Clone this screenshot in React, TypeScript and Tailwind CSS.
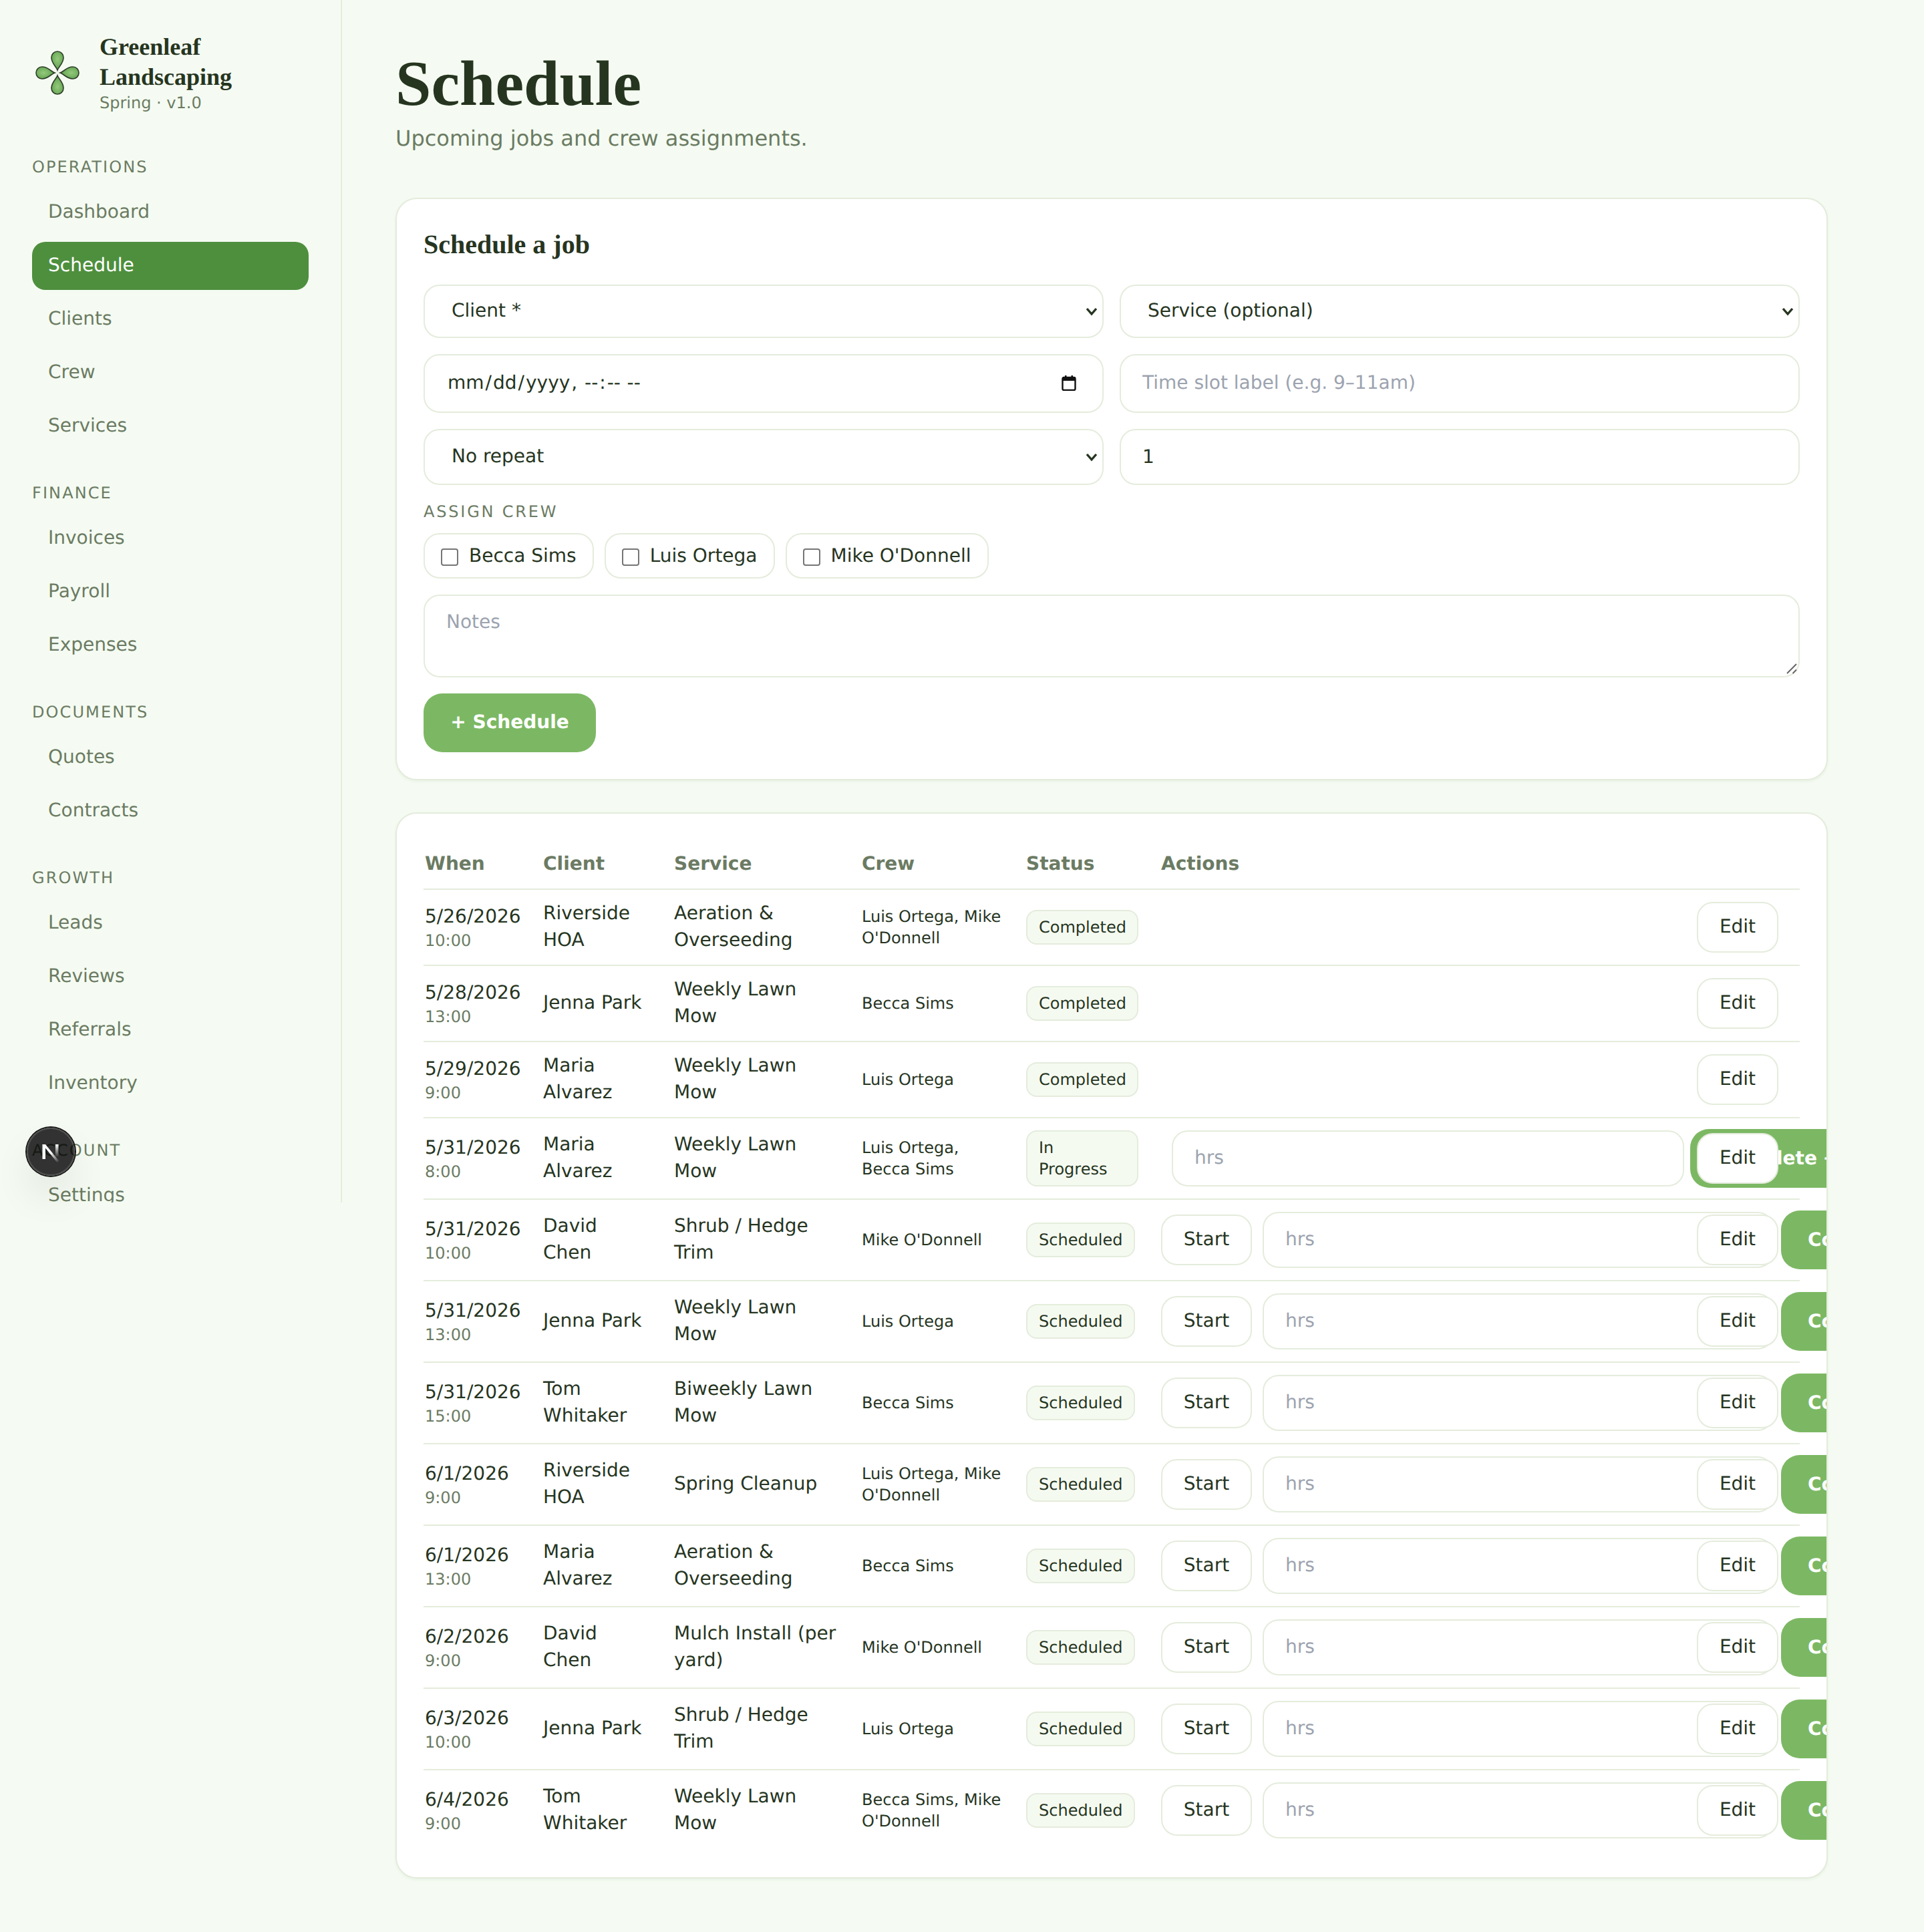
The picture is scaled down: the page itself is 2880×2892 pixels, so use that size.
import React from "react";

const sections = [
  { title: "OPERATIONS", items: ["Dashboard", "Schedule", "Clients", "Crew", "Services"] },
  { title: "FINANCE", items: ["Invoices", "Payroll", "Expenses"] },
  { title: "DOCUMENTS", items: ["Quotes", "Contracts"] },
  { title: "GROWTH", items: ["Leads", "Reviews", "Referrals", "Inventory"] },
  { title: "ACCOUNT", items: ["Settings"] },
];

type Kind = "done" | "progress" | "sched";
const rows: { d: string; t: string; c: string; s: string; w: string; st: string; k: Kind }[] = [
  { d: "5/26/2026", t: "10:00", c: "Riverside HOA", s: "Aeration & Overseeding", w: "Luis Ortega, Mike O'Donnell", st: "Completed", k: "done" },
  { d: "5/28/2026", t: "13:00", c: "Jenna Park", s: "Weekly Lawn Mow", w: "Becca Sims", st: "Completed", k: "done" },
  { d: "5/29/2026", t: "9:00", c: "Maria Alvarez", s: "Weekly Lawn Mow", w: "Luis Ortega", st: "Completed", k: "done" },
  { d: "5/31/2026", t: "8:00", c: "Maria Alvarez", s: "Weekly Lawn Mow", w: "Luis Ortega, Becca Sims", st: "In Progress", k: "progress" },
  { d: "5/31/2026", t: "10:00", c: "David Chen", s: "Shrub / Hedge Trim", w: "Mike O'Donnell", st: "Scheduled", k: "sched" },
  { d: "5/31/2026", t: "13:00", c: "Jenna Park", s: "Weekly Lawn Mow", w: "Luis Ortega", st: "Scheduled", k: "sched" },
  { d: "5/31/2026", t: "15:00", c: "Tom Whitaker", s: "Biweekly Lawn Mow", w: "Becca Sims", st: "Scheduled", k: "sched" },
  { d: "6/1/2026", t: "9:00", c: "Riverside HOA", s: "Spring Cleanup", w: "Luis Ortega, Mike O'Donnell", st: "Scheduled", k: "sched" },
  { d: "6/1/2026", t: "13:00", c: "Maria Alvarez", s: "Aeration & Overseeding", w: "Becca Sims", st: "Scheduled", k: "sched" },
  { d: "6/2/2026", t: "9:00", c: "David Chen", s: "Mulch Install (per yard)", w: "Mike O'Donnell", st: "Scheduled", k: "sched" },
  { d: "6/3/2026", t: "10:00", c: "Jenna Park", s: "Shrub / Hedge Trim", w: "Luis Ortega", st: "Scheduled", k: "sched" },
  { d: "6/4/2026", t: "9:00", c: "Tom Whitaker", s: "Weekly Lawn Mow", w: "Becca Sims, Mike O'Donnell", st: "Scheduled", k: "sched" },
];

const field =
  "w-full rounded-[24px] border-2 border-[#e4ecdc] bg-white text-[28px] leading-[40px] text-[#26351f] outline-none placeholder:text-[#9ca3af]";

function Logo() {
  const petal = "M38 34 C36 28 29 24 29 15 A9 9 0 0 1 47 15 C47 24 40 28 38 34 Z";
  return (
    <svg width="76" height="76" viewBox="0 0 76 76" className="shrink-0">
      <defs>
        <radialGradient id="leaf" cx="50%" cy="40%" r="60%">
          <stop offset="0%" stopColor="#94c97c" />
          <stop offset="100%" stopColor="#5d9f4c" />
        </radialGradient>
      </defs>
      {[0, 90, 180, 270].map((a) => (
        <path key={a} d={petal} fill="url(#leaf)" stroke="#2f3e2a" strokeWidth="1.6" transform={`rotate(${a} 38 38)`} />
      ))}
    </svg>
  );
}

function Chevron() {
  return (
    <svg width="18" height="13" viewBox="0 0 18 13" className="pointer-events-none absolute right-[9px] top-1/2 -translate-y-[6px]">
      <path d="M2 2 L9 10 L16 2" fill="none" stroke="#26351f" strokeWidth="3.4" />
    </svg>
  );
}

function Select({ label, className }: { label: string; className: string }) {
  return (
    <div className={`relative ${className}`}>
      <select className={`${field} h-full appearance-none pb-[2px] pl-[40px] pr-[40px]`} defaultValue={label}>
        <option>{label}</option>
      </select>
      <Chevron />
    </div>
  );
}

function Chip({ name }: { name: string }) {
  return (
    <label className="flex h-[68px] items-center gap-[16px] rounded-[24px] border-2 border-[#e4ecdc] bg-white pl-[24px] pr-[24px] text-[28px] leading-[40px] text-[#26351f]">
      <input type="checkbox" className="h-[26px] w-[26px] translate-y-[2px] appearance-none rounded-[4px] border-2 border-[#767676] bg-white" />
      {name}
    </label>
  );
}

function Complete() {
  return (
    <button className="h-[88px] shrink-0 whitespace-nowrap rounded-[28px] bg-[#7cb863] px-[40px] text-[28px] font-bold leading-[40px] text-white">
      Complete →
    </button>
  );
}

function GhostButton({ children, className = "" }: { children: React.ReactNode; className?: string }) {
  return (
    <button className={`h-[76px] shrink-0 rounded-[24px] border-2 border-[#e4ecdc] bg-white px-[32px] text-[28px] leading-[40px] text-[#26351f] ${className}`}>
      {children}
    </button>
  );
}

export default function App() {
  return (
    <div className="relative flex min-h-[2892px] w-full items-start bg-[#f5fbf2] font-['DejaVu_Sans',sans-serif] text-[#26351f] [&_*]:[text-rendering:geometricPrecision]">
      <aside className="h-[1800px] w-[512px] shrink-0 overflow-hidden border-r-2 border-[#e4ecdc] px-[48px] pt-[48px]">
        <div className="mb-[64px] flex items-center gap-[25px]">
          <Logo />
          <div>
            <div className="font-['Liberation_Serif',serif] text-[36px] font-bold leading-[45px] text-[#26351f]">
              Greenleaf Landscaping
            </div>
            <div className="text-[24px] leading-[32px] text-[#6b7b63]">Spring · v1.0</div>
          </div>
        </div>
        <nav className="flex flex-col gap-[48px]">
          {sections.map((s) => (
            <div key={s.title}>
              <div className="mb-[16px] text-[24px] leading-[32px] tracking-[2.1px] text-[#6b7b63]">{s.title}</div>
              <div className="flex w-[414px] flex-col gap-[8px]">
                {s.items.map((i) => (
                  <a
                    key={i}
                    className={`flex h-[72px] shrink-0 items-center rounded-[20px] px-[24px] pb-[2px] text-[28px] leading-[40px] ${
                      i === "Schedule" ? "bg-[#4e8f3e] text-white" : "text-[#6b7b63]"
                    }`}
                  >
                    {i}
                  </a>
                ))}
              </div>
            </div>
          ))}
        </nav>
      </aside>

      <main className="w-[2368px] pb-[80px] pl-[80px] pr-[144px] pt-[75px]">
        <h1 className="font-['Liberation_Serif',serif] text-[96px] font-bold leading-[100px] text-[#26351f]">Schedule</h1>
        <p className="mb-[65px] mt-[8px] text-[32px] leading-[48px] text-[#6b7b63]">Upcoming jobs and crew assignments.</p>

        <section className="mb-[48px] rounded-[32px] border-2 border-[#e4ecdc] bg-white p-[40px] shadow-[0_2px_4px_rgba(40,60,30,0.06)]">
          <h2 className="mb-[32px] font-['Liberation_Serif',serif] text-[40px] font-bold leading-[56px] text-[#26351f]">Schedule a job</h2>
          <div className="grid grid-cols-2 gap-x-[24px] gap-y-[24px]">
            <Select label="Client *" className="h-[80px]" />
            <Select label="Service (optional)" className="h-[80px]" />
            <div className="relative h-[88px]">
              <input
                type="datetime-local"
                className={`${field} h-full pb-[2px] pl-[32px] pr-[34px] [&::-webkit-calendar-picker-indicator]:opacity-0 [&::-webkit-datetime-edit-month-field]:px-[2px] [&::-webkit-datetime-edit-day-field]:px-[2px] [&::-webkit-datetime-edit-year-field]:px-[2px] [&::-webkit-datetime-edit-hour-field]:px-[2px] [&::-webkit-datetime-edit-minute-field]:px-[2px] [&::-webkit-datetime-edit-ampm-field]:px-[2px]`}
              />
              <svg width="22" height="24" viewBox="0 0 22 24" className="pointer-events-none absolute left-[955px] top-[31px]">
                <path d="M1.5 6 Q1.5 4 3.5 4 H18.5 Q20.5 4 20.5 6 V21 Q20.5 23 18.5 23 H3.5 Q1.5 23 1.5 21 Z" fill="white" stroke="#111" strokeWidth="2.4" />
                <path d="M1 4 H21 V9 H1 Z M5 1 H7.5 V4 H5 Z M14.5 1 H17 V4 H14.5 Z" fill="#111" />
              </svg>
            </div>
            <input className={`${field} h-[88px] px-[32px] pb-[4px]`} placeholder="Time slot label (e.g. 9–11am)" />
            <Select label="No repeat" className="h-[84px]" />
            <input type="number" defaultValue={1} className={`${field} h-[84px] px-[32px] pb-[2px]`} />
          </div>
          <div className="mb-[16px] mt-[24px] text-[24px] leading-[32px] tracking-[2.8px] text-[#6b7b63]">ASSIGN CREW</div>
          <div className="mb-[24px] flex gap-[16px]">
            <Chip name="Becca Sims" />
            <Chip name="Luis Ortega" />
            <Chip name="Mike O'Donnell" />
          </div>
          <div className="relative mb-[24px] h-[124px]">
            <textarea className={`${field} h-full resize-none px-[32px] py-[19px]`} placeholder="Notes" />
            <svg width="18" height="18" viewBox="0 0 18 18" className="pointer-events-none absolute bottom-[4px] right-[2px]">
              <path d="M1 16 L15 2 M9.5 16 L15 10.5" stroke="#666" strokeWidth="2" fill="none" />
            </svg>
          </div>
          <button className="h-[88px] w-[258px] rounded-[28px] bg-[#7cb863] pb-[2px] text-[28px] font-bold leading-[40px] text-white">+ Schedule</button>
        </section>

        <section className="overflow-hidden rounded-[32px] border-2 border-[#e4ecdc] bg-white p-[40px] shadow-[0_2px_4px_rgba(40,60,30,0.06)]">
          <table className="w-[2060px] table-fixed border-separate border-spacing-0 text-left">
            <colgroup>
              <col className="w-[177px]" />
              <col className="w-[195px]" />
              <col className="w-[282px]" />
              <col className="w-[246px]" />
              <col className="w-[202px]" />
              <col className="w-[958px]" />
            </colgroup>
            <thead>
              <tr>
                {["When", "Client", "Service", "Crew", "Status", "Actions"].map((h) => (
                  <th
                    key={h}
                    className={`h-[74px] border-b-2 border-[#e4ecdc] pb-[2px] align-middle text-[28px] font-bold leading-[40px] text-[#6b7b63] ${
                      h === "Service" ? "pl-[3px]" : "pl-[2px]"
                    }`}
                  >
                    {h}
                  </th>
                ))}
              </tr>
            </thead>
            <tbody>
              {rows.map((r, idx) => {
                const last = idx === rows.length - 1;
                const base = `${last ? "h-[120px]" : r.k === "done" ? "h-[114px] border-b-2" : "h-[122px] border-b-2"} border-[#e4ecdc] align-middle`;
                const cell = `${base} pl-[2px]`;
                return (
                  <tr key={idx}>
                    <td className={cell}>
                      <div className="text-[28px] leading-[40px] text-[#26351f]">{r.d}</div>
                      <div className="text-[24px] leading-[33px] text-[#6b7b63]">{r.t}</div>
                    </td>
                    <td className={`${cell} pb-[2px] pr-[40px] text-[28px] leading-[40px]`}>{r.c}</td>
                    <td className={`${base} pb-[2px] pl-[3px] pr-[33px] text-[28px] leading-[40px]`}>{r.s}</td>
                    <td className={`${cell} pr-[28px] text-[24px] leading-[32px]`}>{r.w}</td>
                    <td className={cell}>
                      <span className="inline-block max-w-[168px] rounded-[16px] border-2 border-[#e4ecdc] bg-[#f5faf1] pb-[8px] pl-[17px] pr-[16px] pt-[8px] text-[24px] leading-[32px] text-[#26351f]">
                        {r.st}
                      </span>
                    </td>
                    <td className={`${cell} relative`}>
                      {r.k === "sched" && (
                        <div className="flex w-[958px] items-center">
                          <GhostButton className="w-[136px] !px-0 pb-[2px]">Start</GhostButton>
                          <input className={`${field} ml-[16px] h-[84px] !w-[765px] shrink-0 px-[32px] pb-[4px]`} placeholder="hrs" />
                          <div className="ml-[11px] shrink-0">
                            <Complete />
                          </div>
                        </div>
                      )}
                      {r.k === "progress" && (
                        <div className="flex w-[958px] items-center pl-[16px]">
                          <input className={`${field} h-[84px] !w-[767px] shrink-0 px-[32px] pb-[4px]`} placeholder="hrs" />
                          <div className="ml-[9px] shrink-0">
                            <Complete />
                          </div>
                        </div>
                      )}
                      <GhostButton className="absolute right-[32px] top-1/2 w-[122px] -translate-y-1/2 !px-0 pb-[2px]">Edit</GhostButton>
                    </td>
                  </tr>
                );
              })}
            </tbody>
          </table>
        </section>
      </main>

      <div className="absolute left-[40px] top-[1688px] h-[72px] w-[72px] rounded-full bg-black/80 shadow-[0_0_0_2px_#171717,inset_0_0_0_2px_rgba(255,255,255,0.14),0_32px_64px_-16px_rgba(0,0,0,0.24)]">
        <svg width="72" height="72" viewBox="2 2 72 72">
          <defs>
            <linearGradient id="nd" x1="30" y1="30" x2="50" y2="54" gradientUnits="userSpaceOnUse">
              <stop offset="0.4" stopColor="#fff" />
              <stop offset="1" stopColor="#fff" stopOpacity="0" />
            </linearGradient>
            <linearGradient id="ns" x1="47" y1="27" x2="47" y2="46" gradientUnits="userSpaceOnUse">
              <stop offset="0" stopColor="#fff" />
              <stop offset="1" stopColor="#fff" stopOpacity="0" />
            </linearGradient>
          </defs>
          <rect x="25.5" y="27" width="4.5" height="22" fill="#fff" />
          <path d="M25.5 27 H30 L50.5 52 L47.5 54 Z" fill="url(#nd)" />
          <rect x="45" y="27" width="4.5" height="19" fill="url(#ns)" />
        </svg>
      </div>
    </div>
  );
}
